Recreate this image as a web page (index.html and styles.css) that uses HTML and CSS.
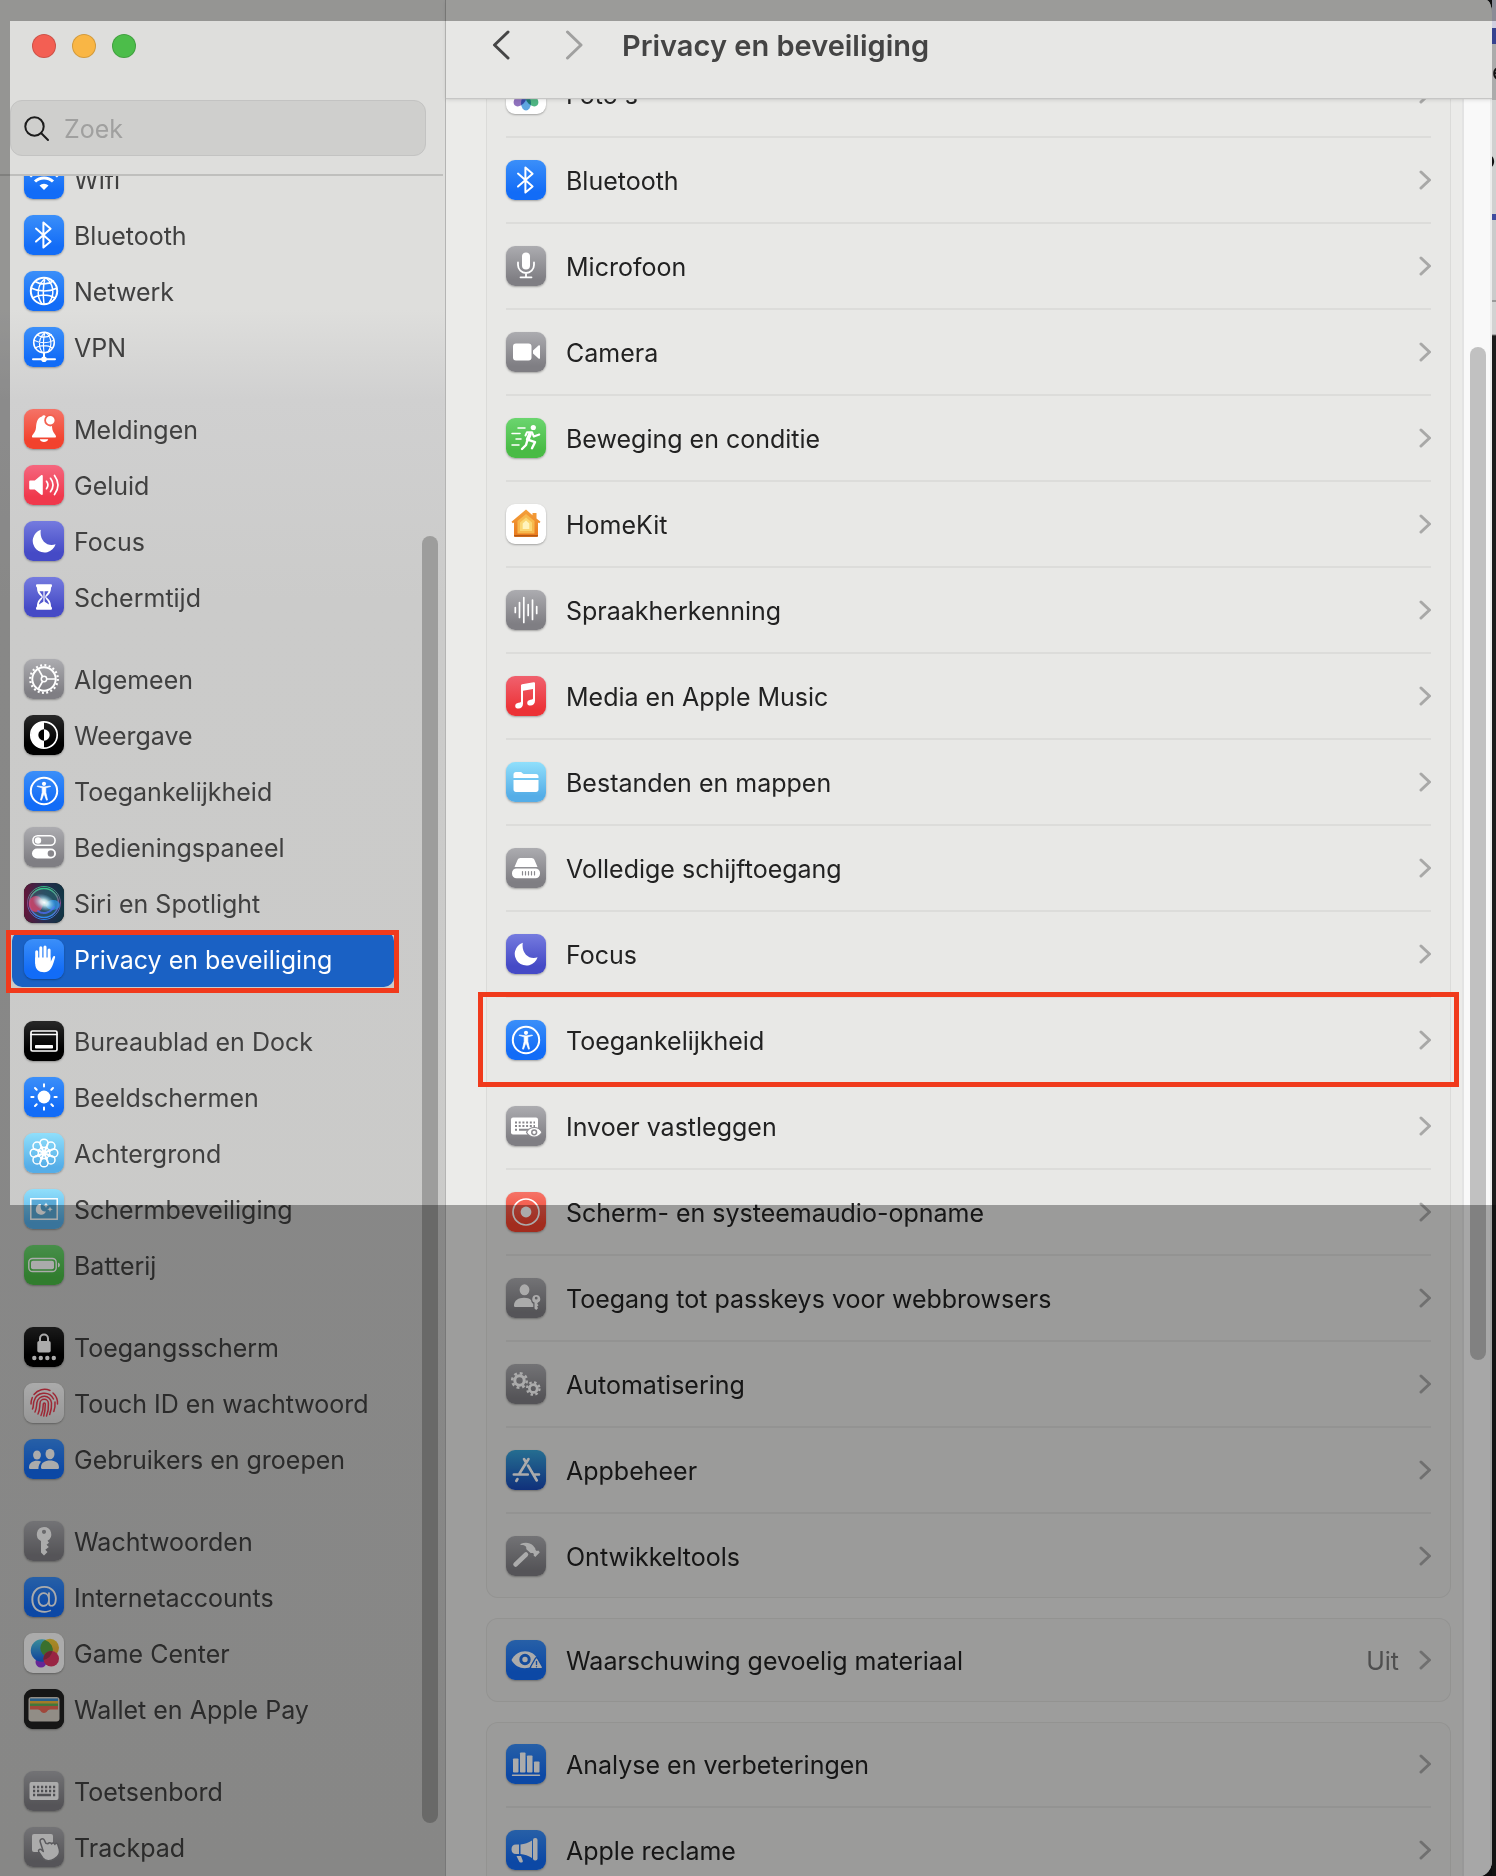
FILE: index.html
```html
<!DOCTYPE html>
<html lang="nl">
<head>
<meta charset="utf-8">
<meta name="viewport" content="width=device-width, initial-scale=1">
<title>Privacy en beveiliging</title>
<link rel="stylesheet" href="styles.css">
</head>
<body>
<svg class="defs" aria-hidden="true">
  <defs>
    <radialGradient id="siri-bg" cx="50%" cy="50%" r="70%"><stop offset="0" stop-color="#4a4a78"/><stop offset="1" stop-color="#101a2a"/></radialGradient>
    <linearGradient id="siri-side" x1="0" x2="1" y1="0" y2="0"><stop offset="0" stop-color="#7a1138"/><stop offset=".5" stop-color="#2a2a50"/><stop offset="1" stop-color="#0c3b46"/></linearGradient>
    <radialGradient id="siri-glow"><stop offset="0" stop-color="#fff"/><stop offset=".35" stop-color="#dff" stop-opacity=".8"/><stop offset="1" stop-color="#7cf" stop-opacity="0"/></radialGradient>
    <linearGradient id="siri-ring" x1="0" x2="0" y1="0" y2="1"><stop offset="0" stop-color="#37c58b"/><stop offset=".5" stop-color="#8a4a90"/><stop offset="1" stop-color="#2e8cf0"/></linearGradient>
    <linearGradient id="gc-blue" x1="0" x2="0" y1="0" y2="1"><stop offset="0" stop-color="#54d2e6"/><stop offset="1" stop-color="#1763e8"/></linearGradient>
    <linearGradient id="gc-yellow" x1="0" x2="0" y1="0" y2="1"><stop offset="0" stop-color="#f6d43a"/><stop offset="1" stop-color="#f5a63a"/></linearGradient>
    <linearGradient id="house" x1="0" x2="0" y1="0" y2="1"><stop offset="0" stop-color="#f5a13c"/><stop offset="1" stop-color="#e8791c"/></linearGradient>
    <symbol id="bluetooth" viewBox="0 0 40 40"><path d="M12 13.6 26.6 26.4 19.4 32.5V7.6L26.6 13.7 12 26.6"/></symbol>
    <symbol id="moon" viewBox="0 0 40 40"><path fill="#fff" stroke="none" d="M16.8 8.7A11.7 11.7 0 1 0 31.6 23.3C24 26.5 15 20 16.8 8.7z"/></symbol>
    <symbol id="access" viewBox="0 0 40 40"><circle cx="20" cy="20" r="13.2"/><circle cx="20" cy="12.8" r="2.1" fill="#fff" stroke="none"/><path fill="#fff" stroke-width=".7" d="M13.500 15.500l4.700 1.300v4.700l-1.700 7.500 1 .2 2.500-6.800 2.500 6.800 1-.2-1.700-7.500v-4.700l4.700-1.300-.2-.5-6.300.9-6.300-.9z"/></symbol>
    <symbol id="globe" viewBox="0 0 40 40"><circle cx="20" cy="20" r="13.2"/><path stroke-width="1.500" d="M7 17c8 4 18 4 25 .5M8.500 27c7-4 16-4 22.500 0M22 7c-9 6-10 18-4 26M21 7c-2 8-2 18-1 26M22 7c8 6 9 17 3 25M11 10.500c6 3.500 13 3 18.500-.5"/></symbol>
    <symbol id="chevron" viewBox="0 0 12 20"><path d="M2 2l8.500 8L2 18"/></symbol>
  </defs>
</svg>

<div class="desktop">
<div class="window">
  <aside class="sidebar">
    <div class="lights">
      <button class="light close" type="button" aria-label="Sluit"></button>
      <button class="light minimize" type="button" aria-label="Minimaliseer"></button>
      <button class="light zoom" type="button" aria-label="Vergroot"></button>
    </div>
    <label class="search">
      <svg viewBox="0 0 26 26" aria-hidden="true"><circle cx="10.500" cy="10.500" r="9.200"/><path d="M17.300 17.300 24 24"/></svg>
      <input type="search" placeholder="Zoek" aria-label="Zoek">
    </label>
    <nav class="list" aria-label="Instellingen">
      <div class="group">
        <a class="item" href="#"><svg class="tile blue" viewBox="0 0 40 40"><path stroke-width="3" stroke-linecap="butt" d="M6 17.500a20 20 0 0 1 28 0M11 22.500a13 13 0 0 1 18 0"/><path class="solid" d="M20 31l-4.500-4.500a6.500 6.500 0 0 1 9 0z"/></svg><span>Wifi</span></a>
        <a class="item" href="#"><svg class="tile blue" viewBox="0 0 40 40"><use href="#bluetooth"/></svg><span>Bluetooth</span></a>
        <a class="item" href="#"><svg class="tile blue" viewBox="0 0 40 40"><use href="#globe"/></svg><span>Netwerk</span></a>
        <a class="item" href="#"><svg class="tile blue" viewBox="0 0 40 40"><g transform="translate(4.400 -.1) scale(.78)"><use href="#globe" width="40" height="40"/></g><path d="M9 32.300h22M20 26v5"/><circle class="solid" cx="20" cy="32.300" r="2.800"/></svg><span>VPN</span></a>
      </div>
      <div class="group">
        <a class="item" href="#"><svg class="tile red" viewBox="0 0 40 40"><path class="solid" d="M8 27.500c0-2 3.500-3.500 4-9C12.400 12 14 8.500 18 7.500c.8-1.600 3-1.600 3.800 0 4.200 1 6 5 6.300 11 .5 5.500 3.900 7 3.900 9 0 .6-.4 1-1 1H9c-.6 0-1-.4-1-1zM15.800 30.300h8.400c-.8 3.600-7.600 3.600-8.400 0z"/><circle cx="26.300" cy="11.300" r="5.200" fill="#fff" stroke="#f3604f" stroke-width="1.800"/></svg><span>Meldingen</span></a>
        <a class="item" href="#"><svg class="tile pink" viewBox="0 0 40 40"><path class="solid" d="M6.500 15.500h4.300l6-5c1-.8 2-.4 2 .8v17.400c0 1.200-1 1.600-2 .8l-6-5H6.500c-.8 0-1.300-.5-1.300-1.300v-6.400c0-.8.5-1.300 1.300-1.300z"/><path stroke-width="1.700" d="M22.500 16.300q2.800 3.700 0 7.400M26.500 13.300q5 6.700 0 13.400M30.500 10.500q7 9.500 0 19"/></svg><span>Geluid</span></a>
        <a class="item" href="#"><svg class="tile indigo" viewBox="0 0 40 40"><use href="#moon"/></svg><span>Focus</span></a>
        <a class="item" href="#"><svg class="tile indigo" viewBox="0 0 40 40"><path class="solid" d="M12 8.500c0-.8.500-1.300 1.300-1.300h13.400c.8 0 1.300.5 1.300 1.300 0 1.300-.5 1.500-1 2 0 4.800-1.500 6.500-5 9.500 3.500 3 5 4.800 5 9.500.5.500 1 .7 1 2 0 .8-.5 1.300-1.300 1.300H13.300c-.8 0-1.300-.5-1.300-1.300 0-1.300.5-1.500 1-2 0-4.700 1.500-6.500 5-9.500-3.500-3-5-4.700-5-9.500-.5-.5-1-.7-1-2z"/><path fill="#5358cf" stroke="none" d="M15.500 14.300h9c-1 2.300-3.300 3.500-3.300 5.700s3.800 4 3.800 7.500l-5-3.200-5 3.200c0-3.500 3.800-5.300 3.800-7.500s-2.300-3.400-3.300-5.700z"/><path stroke-width="1.200" d="M20 14v12"/></svg><span>Schermtijd</span></a>
      </div>
      <div class="group">
        <a class="item" href="#"><svg class="tile gray" viewBox="0 0 40 40"><circle cx="20" cy="20" r="11.700" stroke-width="1.900"/><circle cx="20" cy="20" r="13.800" stroke-width="2.200" stroke-linecap="butt" stroke-dasharray="1.950 2.384"/><circle cx="20" cy="20" r="2.700" stroke-width="1.500"/><path stroke-width="1.700" d="M22.700 20H31M18.600 17.700 14.300 10M18.600 22.300 14.300 30"/></svg><span>Algemeen</span></a>
        <a class="item" href="#"><svg class="tile black" viewBox="0 0 40 40"><circle cx="20" cy="20" r="13.200" stroke-width="1.700"/><path class="solid" d="M20 7a13 13 0 0 0 0 26z"/><path fill="#000" stroke="none" d="M20 14.300a5.700 5.700 0 0 0 0 11.400z"/><path class="solid" d="M20 14.300a5.700 5.700 0 0 1 0 11.400z"/></svg><span>Weergave</span></a>
        <a class="item" href="#"><svg class="tile blue" viewBox="0 0 40 40"><use href="#access"/></svg><span>Toegankelijkheid</span></a>
        <a class="item" href="#"><svg class="tile gray" viewBox="0 0 40 40"><rect x="8.900" y="8.700" width="22.200" height="9.600" rx="4.800" stroke-width="1.600"/><circle class="solid" cx="14" cy="13.500" r="3.200"/><rect class="solid" x="8" y="21.500" width="24" height="10" rx="5"/><circle cx="26.900" cy="26.500" r="3.200" fill="#87868b" stroke="none"/></svg><span>Bedieningspaneel</span></a>
        <a class="item" href="#"><svg class="tile black" viewBox="0 0 40 40"><rect width="40" height="40" rx="9" fill="url(#siri-bg)" stroke="none"/><rect width="40" height="40" rx="9" fill="url(#siri-side)" stroke="none" opacity=".75"/><circle cx="20" cy="20" r="16.500" stroke="url(#siri-ring)" stroke-width="1" opacity=".9"/><circle cx="20" cy="20" r="14.500" stroke="url(#siri-ring)" stroke-width="1.500" fill="#2b8f86" fill-opacity=".35"/><ellipse cx="12" cy="21" rx="7" ry="8" fill="#e0456e" stroke="none" opacity=".75"/><ellipse cx="29" cy="22" rx="7" ry="5" fill="#2f8fe0" stroke="none" opacity=".8"/><path d="M14 28c5 4 12 2 16-4" stroke="#4a6cf0" stroke-width="2" opacity=".8"/><ellipse cx="20" cy="19.500" rx="12" ry="8" fill="url(#siri-glow)" stroke="none" transform="rotate(25 20 20)"/></svg><span>Siri en Spotlight</span></a>
        <a class="item selected marked" href="#" aria-current="page"><svg class="tile blue" viewBox="0 0 40 40"><path stroke-width="3" d="M12.700 12.800v11M16.800 8.800v13M21 7.900v13M25.100 11v12"/><path class="solid" d="M11.200 18.500h15.400v4.500c1-2 1.800-4.200 2.700-5.400.8-1 2.200-.4 1.800.9-1 3.500-2.300 8-4 10.800-1.600 2.700-4 3.900-7 3.900-5.500 0-8.900-3-8.900-8.700z"/></svg><span>Privacy en beveiliging</span></a>
      </div>
      <div class="group">
        <a class="item" href="#"><svg class="tile black" viewBox="0 0 40 40"><rect x="7" y="10" width="26" height="20" rx="1.500" stroke-width="1.700"/><path stroke-width="1.300" d="M7 13.500h26"/><rect class="solid" x="11" y="24" width="18" height="3.500" rx=".8"/></svg><span>Bureaublad en Dock</span></a>
        <a class="item" href="#"><svg class="tile blue" viewBox="0 0 40 40"><circle class="solid" cx="20" cy="20" r="6.400"/><path d="M20 7.300v2.200M20 30.500v2.200M7.300 20h2.200M30.500 20h2.200M11 11l1.700 1.700M27.300 27.300 29 29M29 11l-1.700 1.700M12.700 27.300 11 29"/></svg><span>Beeldschermen</span></a>
        <a class="item" href="#"><svg class="tile cyan" viewBox="0 0 40 40"><g class="thin"><circle cx="20" cy="10.300" r="4.100"/><circle cx="26.900" cy="13.100" r="4.100"/><circle cx="29.700" cy="20" r="4.100"/><circle cx="26.900" cy="26.900" r="4.100"/><circle cx="20" cy="29.700" r="4.100"/><circle cx="13.100" cy="26.900" r="4.100"/><circle cx="10.300" cy="20" r="4.100"/><circle cx="13.100" cy="13.100" r="4.100"/><path d="M18 14l2 6 2-6M18 26l2-6 2 6M14 18l6 2-6 2M26 18l-6 2 6 2M14.500 17l5.500 3-3-5.500M25.500 23 20 20l3 5.500M25.500 17 20 20l3-5.500M14.500 23l5.500-3-3 5.500"/></g><circle class="solid" cx="20" cy="20" r="2.500"/></svg><span>Achtergrond</span></a>
        <a class="item" href="#"><svg class="tile cyan" viewBox="0 0 40 40"><rect x="6.800" y="9.800" width="26.400" height="20.400" fill="#5aa9d6" stroke-width="1.500" stroke-linejoin="miter"/><path class="solid" d="M17 15a5.300 5.300 0 1 0 5 7.300C18.500 23.300 15.500 20 17 15zM22 13.500l.8 2 2 .8-2 .8-.8 2-.8-2-2-.8 2-.8zM26 17.500l.8 2 2 .8-2 .8-.8 2-.8-2-2-.8 2-.8z"/></svg><span>Schermbeveiliging</span></a>
        <a class="item" href="#"><svg class="tile green" viewBox="0 0 40 40"><rect x="4.800" y="13.500" width="27.400" height="13" rx="3.800" stroke-width="1.400"/><rect class="solid" x="7" y="15.700" width="23" height="8.600" rx="2"/><path class="solid" d="M34 17.500c2.500 1 2.500 4 0 5z"/></svg><span>Batterij</span></a>
      </div>
      <div class="group">
        <a class="item" href="#"><svg class="tile black" viewBox="0 0 40 40"><rect class="solid" x="13.300" y="14" width="13.400" height="11.500" rx="1.800"/><path d="M16 14.500v-3a4 4 0 0 1 8 0v3"/><g class="solid"><circle cx="10.300" cy="31" r="2.200"/><circle cx="16.800" cy="31" r="2.200"/><circle cx="23.300" cy="31" r="2.200"/><circle cx="29.800" cy="31" r="2.200"/></g></svg><span>Toegangsscherm</span></a>
        <a class="item" href="#"><svg class="tile paper" viewBox="0 0 40 40"><g stroke="#ea3c50" stroke-width="1.500"><path d="M10 11.500a13.500 13.500 0 0 1 16-4M29 10a13.500 13.500 0 0 1 4.500 11M7 21c0-2.500.5-4.500 1.300-6.500M8.500 26c1.300-2.500.5-5 1.500-8a10.500 10.500 0 0 1 19.500-2M31 19c.3 4-.2 7-1.200 9.500M11 29c1.800-3.500 1.300-6 2-9.500a7.300 7.300 0 0 1 14.500.5c.3 4-.5 8-1.800 11.500M14 31c2-4 1.500-7 2-10.500a4.200 4.200 0 0 1 8.400 0c.3 4-.6 9-1.900 12.500M17 32.500c2-4 2.300-7.500 2.300-11.500a1 1 0 0 1 2 0c0 5-.3 8-1.600 12"/></g></svg><span>Touch ID en wachtwoord</span></a>
        <a class="item" href="#"><svg class="tile blue" viewBox="0 0 40 40"><g class="solid"><ellipse cx="13" cy="16" rx="3.900" ry="4.500"/><ellipse cx="26" cy="15" rx="4.500" ry="5.200"/><path d="M5 28.500c0-4.500 3.500-6.800 8-6.800 1.600 0 3 .3 4.200 1-1.700 1.500-2.800 3.800-2.800 7.300H6.200c-.8 0-1.200-.6-1.200-1.500zM17 28.500c0-5 4-7 9-7s9 2 9 7c0 .9-.5 1.500-1.300 1.500H18.300c-.8 0-1.300-.6-1.300-1.500z"/></g></svg><span>Gebruikers en groepen</span></a>
      </div>
      <div class="group">
        <a class="item" href="#"><svg class="tile gray" viewBox="0 0 40 40"><path class="solid" fill-rule="evenodd" d="M20 6a7.300 7.300 0 0 0-3 13.900v11.600l3 3 3.500-3.500-2.200-2.300 3.500-2.700-2.300-2.300 2.500-2-1.500-2V19.700A7.300 7.300 0 0 0 20 6zm0 2.700a2.100 2.100 0 1 1 0 4.200 2.100 2.100 0 0 1 0-4.200z"/></svg><span>Wachtwoorden</span></a>
        <a class="item" href="#"><svg class="tile blue" viewBox="0 0 40 40"><text x="20" y="30">@</text></svg><span>Internetaccounts</span></a>
        <a class="item" href="#"><svg class="tile white" viewBox="0 0 40 40"><g stroke="none"><circle cx="17" cy="29" r="5.500" fill="#9a3be0"/><circle cx="18" cy="17.500" r="11.200" fill="url(#gc-blue)"/><circle cx="26" cy="14.800" r="9" fill="url(#gc-yellow)"/><path fill="#55a845" d="M21 7a11.200 11.200 0 0 1 7.700 13.500 11 11 0 0 1-1.500 3.200A9 9 0 0 1 21 7z"/><circle cx="27.200" cy="25.800" r="7.800" fill="#e53765"/><path fill="#a8354f" d="M28.300 18.100a7.800 7.800 0 0 0-8.900 7.400l.1 1.500a11 11 0 0 0 8.800-8.900z"/></g></svg><span>Game Center</span></a>
        <a class="item" href="#"><svg class="tile black" viewBox="0 0 40 40"><g stroke="none"><rect width="40" height="40" rx="9" fill="#222"/><rect x="4.500" y="8" width="31" height="24.500" rx="3" fill="#d8d2c8"/><rect x="6" y="9.500" width="28" height="4" fill="#3d8fd0"/><rect x="6" y="12" width="28" height="4" fill="#f2b63c"/><rect x="6" y="14.500" width="28" height="5" fill="#63b35a"/><path fill="#ef6a57" d="M6 17h28v3.500h-8c-2.500 0-3 3.500-6 3.500s-3.500-3.500-6-3.500H6z"/></g></svg><span>Wallet en Apple Pay</span></a>
      </div>
      <div class="group">
        <a class="item" href="#"><svg class="tile gray" viewBox="0 0 40 40"><rect class="solid" x="5.500" y="11" width="29" height="18" rx="2"/><g stroke="#77767b" stroke-width="2.400" stroke-linecap="butt"><path stroke-dasharray="2.200 1.800" d="M9 16h23M9 20h23"/><path d="M9 24h2.200M13 24h14M29 24h2.200"/></g></svg><span>Toetsenbord</span></a>
        <a class="item" href="#"><svg class="tile gray" viewBox="0 0 40 40"><rect class="solid" x="8" y="7" width="21" height="18" rx="2"/><path fill="#fff" stroke="#87868b" stroke-width="1.500" d="M17.500 12c-1.500.5-1.700 1.800-1.200 3.200l3 9.300-2-1.700c-1.500-1.300-3.500.3-2.500 2l4 6.200c2.500 3.500 8 3.200 11.500 1 5-3 6-6 5-9.500l-1.500-5c-.7-1.700-2.500-1.500-3 0-.3-1.800-2.600-2-3.200-.5-.5-1.500-2.800-1.700-3.500-.2l-2.300-.5-1.500-3.300c-.5-1-1.600-1.400-2.800-1z"/></svg><span>Trackpad</span></a>
      </div>
    </nav>
    <div class="thumb side-thumb"></div>
  </aside>

  <main class="main">
    <header class="toolbar">
      <button class="nav-btn back" type="button" aria-label="Vorige"><svg viewBox="0 0 20 30"><path d="M17 2 3.500 15 17 28"/></svg></button>
      <button class="nav-btn forward" type="button" aria-label="Volgende"><svg viewBox="0 0 20 30"><path d="M3.500 2 17 15 3.500 28"/></svg></button>
      <h1>Privacy en beveiliging</h1>
    </header>
    <div class="body">
      <div class="content">
        <section class="card">
          <a class="row" href="#"><svg class="tile white" viewBox="0 0 40 40"><g class="petals"><ellipse cx="20" cy="12" rx="5" ry="7" fill="#f59a2c"/><ellipse cx="26" cy="14.500" rx="5" ry="7" fill="#e5c832" transform="rotate(45 26 14.500)"/><ellipse cx="28" cy="20" rx="7" ry="5" fill="#8cc84a"/><ellipse cx="26" cy="26" rx="5" ry="7.500" fill="#4fb583" transform="rotate(-45 26 26)"/><ellipse cx="20" cy="29" rx="5" ry="7.500" fill="#5fa6e0"/><ellipse cx="14" cy="26" rx="5" ry="7.500" fill="#8f72bd" transform="rotate(45 14 26)"/><ellipse cx="12" cy="20" rx="7" ry="5" fill="#c04f92"/><ellipse cx="14" cy="14.500" rx="5" ry="7" fill="#e0483c" transform="rotate(-45 14 14.500)"/></g></svg><span class="name">Foto's</span><svg class="chev"><use href="#chevron"/></svg></a>
          <a class="row" href="#"><svg class="tile blue" viewBox="0 0 40 40"><use href="#bluetooth"/></svg><span class="name">Bluetooth</span><svg class="chev"><use href="#chevron"/></svg></a>
          <a class="row" href="#"><svg class="tile gray" viewBox="0 0 40 40"><rect class="solid" x="16" y="6.500" width="8" height="17" rx="4"/><path d="M12 16.500V19a8 8 0 0 0 16 0v-2.500M20 27v4M14.500 31.300h11" stroke-width="1.800"/></svg><span class="name">Microfoon</span><svg class="chev"><use href="#chevron"/></svg></a>
          <a class="row" href="#"><svg class="tile gray" viewBox="0 0 40 40"><rect class="solid" x="7" y="11.500" width="18.500" height="17" rx="3"/><path class="solid" d="M27 18.500l5.500-5c.7-.6 1.500-.3 1.500.6v11.800c0 .9-.8 1.200-1.500.6l-5.500-5z"/></svg><span class="name">Camera</span><svg class="chev"><use href="#chevron"/></svg></a>
          <a class="row" href="#"><svg class="tile green" viewBox="0 0 40 40"><circle class="solid" cx="27.300" cy="9.500" r="2.600"/><path stroke-width="1.500" d="M12 10h7M6 15.500h8M10 21h5M6 27h7"/><path stroke-width="2" d="M19.500 17.500l1.500-3.300h5l1.800 4.300 5.500-2"/><path stroke-width="3.800" d="M24 16l-2.300 5.500"/><path stroke-width="2.400" d="M22.500 21.800l6.500 2.400-3 6M21 23.500l-1 3.500-4 4"/></svg><span class="name">Beweging en conditie</span><svg class="chev"><use href="#chevron"/></svg></a>
          <a class="row" href="#"><svg class="tile white" viewBox="0 0 40 40"><g stroke="none"><path fill="url(#house)" d="M20 5.500l6.500 5.700V9h4v5.500l4 3.200-1.300 1.600-1.200-.8v13c0 .9-.5 1.500-1.500 1.500h-21c-1 0-1.500-.6-1.500-1.500v-13l-1.200.8-1.300-1.600z"/><path fill="#f7b94e" d="M20 10l8.500 7v12.500h-17V17z"/><path fill="#fbd672" d="M20 13.500l6 5V27H14v-8.500z"/><path fill="#fff3bd" d="M20 16.500l3.300 3V25h-6.600v-5.500z"/><path fill="#b65a14" d="M8 31h24v1.500H8z"/></g></svg><span class="name">HomeKit</span><svg class="chev"><use href="#chevron"/></svg></a>
          <a class="row" href="#"><svg class="tile gray" viewBox="0 0 40 40"><path stroke-width="1.700" d="M9.300 17.500v5M13.500 12.500v15M17.800 7.500v25M22.200 14.500v11M26.500 10v19.500M30.700 16.500v7"/></svg><span class="name">Spraakherkenning</span><svg class="chev"><use href="#chevron"/></svg></a>
          <a class="row" href="#"><svg class="tile music" viewBox="0 0 40 40"><path class="solid" d="M15 9.500c0-.7.400-1.200 1.100-1.300l11.500-2c.8-.1 1.400.3 1.400 1.100v17.500c0 3-2 4.800-4.500 4.800-2 0-3.300-1-3.300-2.700s1.300-2.700 3.300-3.100l1.500-.3c.7-.2 1-.5 1-1.200V13l-10 1.800v13c0 3-2 4.800-4.500 4.800-2 0-3.300-1-3.300-2.700s1.300-2.700 3.300-3.100l1.500-.3c.7-.2 1-.5 1-1.200z"/></svg><span class="name">Media en Apple Music</span><svg class="chev"><use href="#chevron"/></svg></a>
          <a class="row" href="#"><svg class="tile cyan" viewBox="0 0 40 40"><path class="solid" d="M7.500 12.500c0-1.500 1-2.500 2.500-2.500h4.500c1.500 0 2 2 3.500 2h12c1.500 0 2.500 1 2.500 2.500V16h-25zM7.500 18h25v9.500c0 1.500-1 2.500-2.500 2.500H10c-1.500 0-2.500-1-2.500-2.500z"/></svg><span class="name">Bestanden en mappen</span><svg class="chev"><use href="#chevron"/></svg></a>
          <a class="row" href="#"><svg class="tile gray" viewBox="0 0 40 40"><path class="solid" d="M8.500 19l3-7c.5-1.300 1.500-2 3-2h11c1.500 0 2.500.7 3 2l3 7z"/><rect class="solid" x="6" y="20.500" width="28" height="9.700" rx="4.500"/><path stroke="#8b8a8f" stroke-width="1.200" d="M16.500 23.500v3.500M19.500 23.500v3.500M22.500 23.500v3.500M25.500 23.500v3.500M28.500 23.500v3.500"/></svg><span class="name">Volledige schijftoegang</span><svg class="chev"><use href="#chevron"/></svg></a>
          <a class="row" href="#"><svg class="tile indigo" viewBox="0 0 40 40"><use href="#moon"/></svg><span class="name">Focus</span><svg class="chev"><use href="#chevron"/></svg></a>
          <a class="row marked" href="#"><svg class="tile blue" viewBox="0 0 40 40"><use href="#access"/></svg><span class="name">Toegankelijkheid</span><svg class="chev"><use href="#chevron"/></svg></a>
          <a class="row" href="#"><svg class="tile gray" viewBox="0 0 40 40"><rect class="solid" x="5" y="11.500" width="27" height="17" rx="2"/><g stroke="#87868b" stroke-width="2" stroke-linecap="butt"><path stroke-dasharray="2 1.700" d="M9 16.500h20M9 20h20"/><path d="M9 23.700h2M13 23.700h10"/></g><path fill="#fff" stroke="#8b8a8f" stroke-width="1.200" d="M20.500 26.300c3.500-6.400 12-6.400 15.500 0-3.500 6.400-12 6.400-15.500 0z"/><circle cx="28.200" cy="26.300" r="2.400" stroke="#8b8a8f" stroke-width="1.500"/></svg><span class="name">Invoer vastleggen</span><svg class="chev"><use href="#chevron"/></svg></a>
          <a class="row" href="#"><svg class="tile red" viewBox="0 0 40 40"><circle cx="20" cy="20" r="13" stroke-width="1.700"/><circle class="solid" cx="20" cy="20" r="5.400"/></svg><span class="name">Scherm- en systeemaudio-opname</span><svg class="chev"><use href="#chevron"/></svg></a>
          <a class="row" href="#"><svg class="tile gray" viewBox="0 0 40 40"><g class="solid"><ellipse cx="18.500" cy="11.800" rx="4.900" ry="5.500"/><path d="M8 27.500c0-5 4.500-7.700 10-7.700 3.300 0 5.500.8 7 2.200.2 2 1 3 2.300 3.800V29H9.300c-.9 0-1.300-.6-1.300-1.500z"/><path fill-rule="evenodd" d="M30.200 17a4 4 0 0 0-1.700 7.600v5.900l1.700 1.500 2-2-1.200-1.300 1.500-1.500-1.300-1.400.8-1.200A4 4 0 0 0 30.200 17zm0 1.800a1.400 1.400 0 1 1 0 2.800 1.400 1.400 0 0 1 0-2.800z"/></g></svg><span class="name">Toegang tot passkeys voor webbrowsers</span><svg class="chev"><use href="#chevron"/></svg></a>
          <a class="row" href="#"><svg class="tile gray" viewBox="0 0 40 40"><g stroke-linecap="butt"><circle cx="13.500" cy="16.500" r="4.700" stroke-width="3"/><circle cx="13.500" cy="16.500" r="7.300" stroke-width="2.500" stroke-dasharray="2.900 2.834"/><circle cx="27.300" cy="24.500" r="3.900" stroke-width="2.700"/><circle cx="27.300" cy="24.500" r="6.200" stroke-width="2.300" stroke-dasharray="2.500 2.370"/></g></svg><span class="name">Automatisering</span><svg class="chev"><use href="#chevron"/></svg></a>
          <a class="row" href="#"><svg class="tile store" viewBox="0 0 40 40"><path stroke-width="2.600" d="M18 9l1.800 3M22.500 9 13.500 23.500M7.800 24.500h14M28 24.500h5M22 15.500l8.800 15M11.500 29 10.300 31"/></svg><span class="name">Appbeheer</span><svg class="chev"><use href="#chevron"/></svg></a>
          <a class="row" href="#"><svg class="tile gray" viewBox="0 0 40 40"><path stroke-width="4.500" d="M9.500 28.500 20 18.500"/><path class="solid" d="M14.500 8c4-2 9-2 12.500 1.500l2 2.500c.5.800.3 1.700.8 2.300l1 .7 1.500-.5 1.500 1.700-4.500 4.800-1.700-1.500.3-1.500-1-1c-.8-.3-1.500.3-2.300 0l-4-3.500c-.7-1 0-2-.6-2.800-1-1.500-3-2-5.500-1.700z"/></svg><span class="name">Ontwikkeltools</span><svg class="chev"><use href="#chevron"/></svg></a>
        </section>
        <section class="card">
          <a class="row" href="#"><svg class="tile blue" viewBox="0 0 40 40"><path class="solid" d="M5.500 20C11 9 26.500 8 32 20c-5.500 11-21 11-26.500 0z"/><circle cx="19" cy="19.500" r="4.200" stroke="#1d6fe8" stroke-width="3"/><path fill="#fff" stroke="#1d6fe8" stroke-width="1.400" d="M29.300 18.500c.7-1.200 1.700-1.200 2.400 0l4.600 8c.6 1.200 0 2.200-1.200 2.200h-9.200c-1.200 0-1.800-1-1.200-2.200z"/><path stroke="#1d6fe8" stroke-width="1.400" d="M30.500 21.500v3M30.500 26.600v.1"/></svg><span class="name">Waarschuwing gevoelig materiaal</span><span class="value">Uit</span><svg class="chev"><use href="#chevron"/></svg></a>
        </section>
        <section class="card">
          <a class="row" href="#"><svg class="tile blue" viewBox="0 0 40 40"><g class="solid"><rect x="7" y="14.500" width="5.500" height="14" rx=".8"/><rect x="14" y="8.500" width="5.500" height="20" rx=".8"/><rect x="21" y="11.500" width="5.500" height="17" rx=".8"/><rect x="28" y="17.500" width="5.500" height="11" rx=".8"/></g><path stroke-width="1.400" d="M6.500 31.300h27"/></svg><span class="name">Analyse en verbeteringen</span><svg class="chev"><use href="#chevron"/></svg></a>
          <a class="row" href="#"><svg class="tile blue" viewBox="0 0 40 40"><g class="solid"><rect x="27" y="8" width="4.500" height="22.500" rx="2"/><path d="M14.500 14.500c4-.5 8-1.800 11.500-4v17.500c-3.500-2.200-7.500-3.500-11.500-4zM13 14.500v9.500h-3c-3 0-4.500-2-4.500-4.800s1.500-4.700 4.500-4.700zM10.500 26h4.500l1.700 4.500c.5 1.500-.3 2-1.300 2-1.400 0-2-.5-2.500-1.500z"/></g></svg><span class="name">Apple reclame</span><svg class="chev"><use href="#chevron"/></svg></a>
        </section>
      </div>
      <div class="track"><div class="thumb main-thumb"></div></div>
    </div>
  </main>
</div>
<div class="behind" aria-hidden="true"><span>e</span><span class="tail">o</span></div>
<div class="spotlight"></div>
</div>
</body>
</html>
```

FILE: styles.css
```css
* { box-sizing: border-box; }

body {
  margin: 0;
  font-family: Inter, "Liberation Sans", sans-serif;
  font-size: 25px;
  line-height: 32px;
  color: #222;
}

a { color: inherit; text-decoration: none; }
button { border: 0; padding: 0; background: none; }
.defs { position: absolute; width: 0; height: 0; }

.desktop {
  position: relative;
  display: flex;
  height: 100vh;
  overflow: hidden;
  background: #151617;
}

.window {
  flex: 1;
  min-width: 0;
  display: flex;
  overflow: hidden;
  background: #ebebe9;
  border-radius: 0 6px 12px 0 / 0 14px 16px 0;
}

/* Slice of the page that lies behind the window */
.behind {
  width: 4px;
  overflow: hidden;
  padding-top: 56px;
  font-size: 24px;
  color: #111;
  background: linear-gradient(#cfcfe0 28px, #36428f 28px 44px, #ababab 44px 100px, #d0d0d0 100px 214px, #3f4b9e 214px 220px, #cbcbcb 220px 300px, #999 300px 302px, #d2d2d2 302px 334px, #1b1b1b 336px);
}
.behind span { display: block; }
.behind .tail { margin: 56px 0 0 -11px; }

/* Sidebar */
.sidebar {
  position: relative;
  width: 446px;
  flex: none;
  display: flex;
  flex-direction: column;
  border-right: 1px solid #b4b4b3;
  background: linear-gradient(#dededc 310px, #d0d0d0 400px, #cbcbca 600px, #cacac8);
}

.lights { display: flex; gap: 16px; padding: 34px 32px 0; }
.light { width: 24px; height: 24px; border-radius: 50%; border: 1px solid rgba(0, 0, 0, .15); }
.close { background: #f35f53; }
.minimize { background: #f9b645; }
.zoom { background: #4cbd4a; }

.search {
  display: flex;
  align-items: center;
  gap: 14px;
  height: 56px;
  margin: 42px 19px 18px 10px;
  padding: 2px 13px 0;
  border: 1px solid #c3c3c2;
  border-radius: 12px;
  background: #cfcfcd;
}
.search svg { width: 26px; height: 26px; flex: none; fill: none; stroke: #1c1c1c; stroke-width: 2; stroke-linecap: round; }
.search input { flex: 1; min-width: 0; border: 0; padding: 0; outline: 0; background: none; font: inherit; color: #222; }
.search input::placeholder { color: #a0a09f; opacity: 1; }

.list {
  flex: 1;
  min-height: 0;
  overflow: hidden;
  display: flex;
  flex-direction: column;
  gap: 26px;
  margin-right: 2px;
  border-top: 2px solid #bfbfbd;
}
/* Both lists are scrolled part of the way down */
.list .group:first-child { margin-top: -25px; }
.group { flex: none; padding: 0 49px 0 12px; }

.item {
  position: relative;
  display: flex;
  align-items: center;
  gap: 10px;
  height: 56px;
  padding: 0 12px;
  color: #404040;
  white-space: nowrap;
}
.item span, .row span { padding-top: 2px; }
.item.selected { border-radius: 10px; background: #1a61c4; color: #fff; }

.marked { position: relative; }
.marked::after {
  content: "";
  position: absolute;
  z-index: 10;
  border: 5px solid #f03a1c;
}
.item.marked::after { inset: -1px -5px -6px -6px; }

.thumb { width: 16px; border-radius: 8px; }
.side-thumb { position: absolute; top: 536px; right: 7px; bottom: 53px; background: #9d9d9c; }

/* Icon tiles */
.tile {
  width: 40px;
  height: 40px;
  flex: none;
  border-radius: 9px;
  box-shadow: 0 1px 2px rgba(0, 0, 0, .3);
  fill: none;
  stroke: #fff;
  stroke-width: 2;
  stroke-linecap: round;
  stroke-linejoin: round;
}
.tile .solid { fill: #fff; stroke: none; }
.tile .thin { stroke-width: 1.5; }
.tile .petals { stroke: none; isolation: isolate; }
.tile .petals ellipse { mix-blend-mode: multiply; }
.tile text { font-size: 30px; font-weight: 300; fill: #fff; stroke: none; text-anchor: middle; }
.blue { background: linear-gradient(#3b8ff9, #126cf7 80%); }
.gray { background: linear-gradient(#acacb0, #7f7e83 85%); }
.red { background: linear-gradient(#f57367, #f2422d 80%); }
.pink { background: linear-gradient(#f5677f, #f0384c 80%); }
.indigo { background: linear-gradient(#757bdf, #454ac6 80%); }
.black { background: linear-gradient(#282828, #000 70%); }
.cyan { background: linear-gradient(#90dffb, #55ade7 85%); }
.green { background: linear-gradient(#6bd56f, #49bb45 80%); }
.music { background: linear-gradient(#f0616e, #ec3236 85%); }
.store { background: linear-gradient(#38a4d8, #1848b8); }
.paper { background: linear-gradient(#fff, #e0e0e0); }
.white { background: #fff; }

/* Main pane */
.main { flex: 1; min-width: 0; display: flex; flex-direction: column; }

.toolbar {
  position: relative;
  z-index: 1;
  flex: none;
  display: flex;
  align-items: center;
  height: 98px;
  padding: 0 45px 8px;
  background: #e7e7e5;
  box-shadow: 0 1px 1px #c6c6c5, 0 2px 4px rgba(0, 0, 0, .12);
}
.nav-btn { width: 20px; height: 30px; }
.nav-btn svg { display: block; width: 20px; height: 30px; fill: none; stroke-width: 3; stroke-linecap: round; stroke-linejoin: round; }
.back { stroke: #464646; }
.forward { margin-left: 53px; stroke: #a0a09f; }
h1 { margin: 0 0 0 38px; padding-top: 2px; font-size: 29px; line-height: 36px; font-weight: 600; color: #444; white-space: nowrap; }

.body { flex: 1; min-height: 0; display: flex; overflow: hidden; }
.content { flex: 1; min-width: 0; margin-top: -46px; padding: 0 11px 0 40px; display: flex; flex-direction: column; gap: 20px; }

.card {
  flex: none;
  padding: 0 20px;
  border-radius: 12px;
  background: #e8e8e6;
  box-shadow: inset 0 0 0 1px #dbdbd9;
}
.row { display: flex; align-items: center; height: 84px; white-space: nowrap; }
.row + .row { height: 86px; border-top: 2px solid #dcdcda; }
.row.marked::after { inset: -6px -28px -5px -28px; }
.name { flex: 1; margin-left: 20px; }
.value { color: #777; }
.chev { width: 12px; height: 20px; flex: none; margin-left: 20px; fill: none; stroke: #a8a8a7; stroke-width: 3; stroke-linecap: round; stroke-linejoin: round; }

.track { width: 30px; flex: none; padding: 249px 0 0 6px; border-left: 2px solid #e3e3e3; border-right: 2px solid #ececec; background: #f9f9f9; }
.main-thumb { height: 1013px; background: #c1c1c1; }

/* Everything outside this rectangle is dimmed */
.spotlight {
  position: absolute;
  z-index: 5;
  top: 21px;
  left: 10px;
  right: 0;
  height: 1184px;
  box-shadow: 0 0 0 2000px rgba(0, 0, 0, .33);
  pointer-events: none;
}
```
